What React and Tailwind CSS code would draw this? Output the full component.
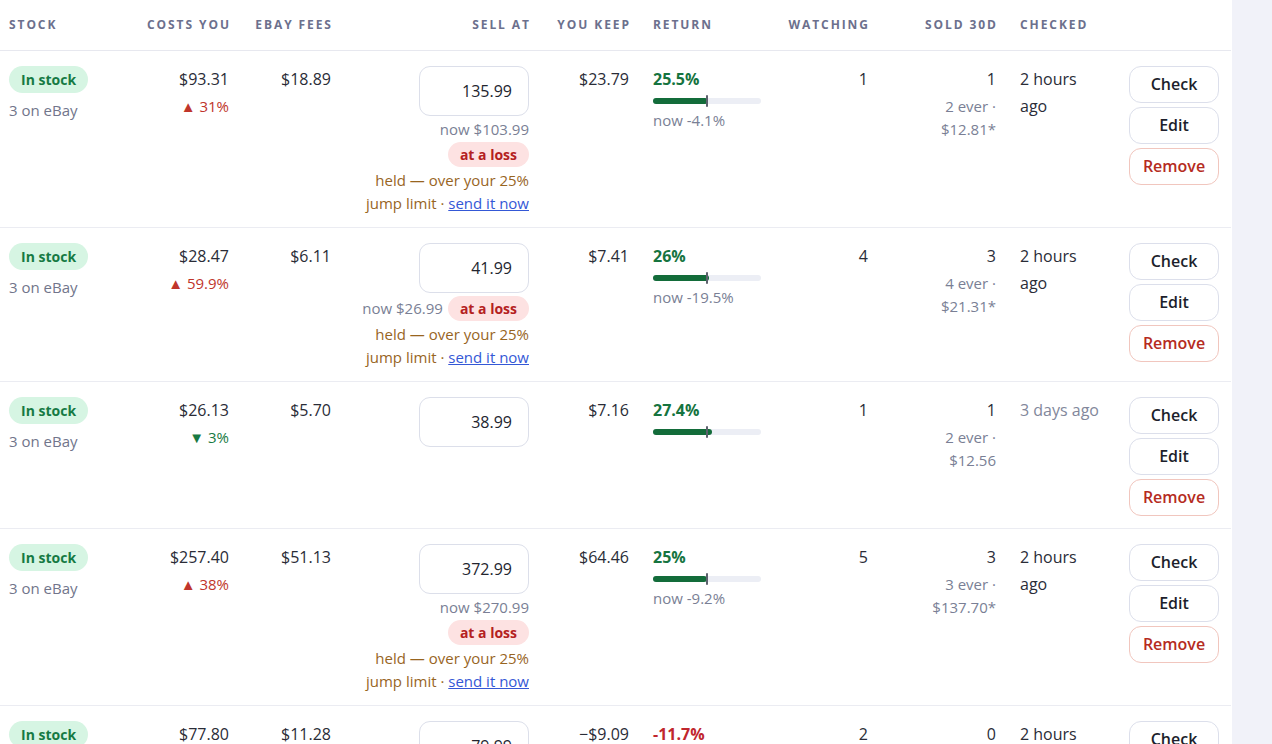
const rows = [
  {
    cost: "$93.31",
    chg: { up: true, v: "31%" },
    fees: "$18.89",
    sell: "135.99",
    now: "$103.99",
    nowInline: false,
    held: true,
    keep: "$23.79",
    ret: 25.5,
    retLabel: "25.5%",
    retNow: "now -4.1%",
    watching: "1",
    sold: "1",
    soldEver: "2 ever ·",
    soldPrice: "$12.81*",
    checked: ["2 hours", "ago"],
  },
  {
    cost: "$28.47",
    chg: { up: true, v: "59.9%" },
    fees: "$6.11",
    sell: "41.99",
    now: "$26.99",
    nowInline: true,
    held: true,
    keep: "$7.41",
    ret: 26,
    retLabel: "26%",
    retNow: "now -19.5%",
    watching: "4",
    sold: "3",
    soldEver: "4 ever ·",
    soldPrice: "$21.31*",
    checked: ["2 hours", "ago"],
  },
  {
    cost: "$26.13",
    chg: { up: false, v: "3%" },
    fees: "$5.70",
    sell: "38.99",
    keep: "$7.16",
    ret: 27.4,
    retLabel: "27.4%",
    watching: "1",
    sold: "1",
    soldEver: "2 ever ·",
    soldPrice: "$12.56",
    checked: ["3 days ago"],
    stale: true,
  },
  {
    cost: "$257.40",
    chg: { up: true, v: "38%" },
    fees: "$51.13",
    sell: "372.99",
    now: "$270.99",
    nowInline: false,
    held: true,
    keep: "$64.46",
    ret: 25,
    retLabel: "25%",
    retNow: "now -9.2%",
    watching: "5",
    sold: "3",
    soldEver: "3 ever ·",
    soldPrice: "$137.70*",
    checked: ["2 hours", "ago"],
  },
  {
    cost: "$77.80",
    chg: { up: true, v: "12%" },
    fees: "$11.28",
    sell: "79.99",
    keep: "\u2212$9.09",
    ret: -11.7,
    retLabel: "-11.7%",
    watching: "2",
    sold: "0",
    checked: ["2 hours", "ago"],
  },
];

const headers = [
  { label: "Stock", align: "left" },
  { label: "Costs you", align: "right" },
  { label: "eBay fees", align: "right" },
  { label: "Sell at", align: "right" },
  { label: "You keep", align: "right" },
  { label: "Return", align: "left" },
  { label: "Watching", align: "right" },
  { label: "Sold 30d", align: "right" },
  { label: "Checked", align: "left" },
  { label: "", align: "left" },
];

function LossPill() {
  return (
    <span className="flex h-[25px] items-center rounded-full bg-[#fde2e2] px-3 text-[14px] font-bold text-[#b42121]">
      at a loss
    </span>
  );
}

function SellAt({ row }) {
  return (
    <div className="flex flex-col items-end">
      <input
        readOnly
        value={row.sell}
        className="h-[50px] w-[110px] rounded-[11px] border border-[#dcdfea] bg-white pr-[16px] text-right text-[16px] text-[#23252f] outline-none"
      />
      {row.now && row.nowInline && (
        <div className="mt-[3px] flex items-center gap-[5px]">
          <span className="text-[15px] leading-[23px] text-[#7a7f95]">now {row.now}</span>
          <LossPill />
        </div>
      )}
      {row.now && !row.nowInline && (
        <>
          <div className="mt-[2px] text-[15px] leading-[23px] text-[#7a7f95]">now {row.now}</div>
          <div className="mt-[1px] flex">
            <LossPill />
          </div>
        </>
      )}
      {row.held && (
        <div className="mt-[2px] text-right text-[15px] leading-[23px] text-[#98651f]">
          <div>held — over your 25%</div>
          <div>
            jump limit ·{" "}
            <a href="#" className="text-[#3458d6] underline">
              send it now
            </a>
          </div>
        </div>
      )}
    </div>
  );
}

function ReturnCell({ row }) {
  const positive = row.ret >= 0;
  const fill = Math.max(0, Math.min(100, (row.ret / 50) * 100));
  return (
    <div>
      <div className={`text-[16px] font-bold leading-[27px] ${positive ? "text-[#16743f]" : "text-[#c0262d]"}`}>
        {row.retLabel}
      </div>
      <div className="relative mt-[5px] h-[6px] w-[108px] rounded-full bg-[#eceef5]">
        <div className="absolute left-0 top-0 h-full rounded-full bg-[#136c3a]" style={{ width: `${fill}%` }} />
        <div className="absolute left-[53px] top-[-3px] h-[12px] w-[2px] rounded-sm bg-[#5d616d]" />
      </div>
      {row.retNow && <div className="mt-[5px] text-[15px] leading-[23px] text-[#7a7f95]">{row.retNow}</div>}
    </div>
  );
}

function Actions() {
  const base = "flex h-[37px] w-[90px] items-center justify-center rounded-[12px] border bg-white text-[16px] font-semibold";
  return (
    <div className="flex flex-col gap-[4px]">
      <button className={`${base} border-[#dcdfeb] text-[#1d1f2c]`}>Check</button>
      <button className={`${base} border-[#dcdfeb] text-[#1d1f2c]`}>Edit</button>
      <button className={`${base} border-[#f1c6be] text-[#b52b21]`}>Remove</button>
    </div>
  );
}

export default function App() {
  const td = "border-b border-[#ebecf2] px-3 pt-[15px] pb-[12px] align-top";
  return (
    <div
      className="flex min-h-screen bg-[#f1f2f9] text-[#2a2c37]"
      style={{ fontFamily: '"Open Sans", "Noto Sans", sans-serif' }}
    >
      <div className="w-[1232px] shrink-0 bg-white">
        <table className="w-[1231px] table-fixed border-collapse">
          <colgroup>
            <col className="w-[133px]" />
            <col className="w-[108px]" />
            <col className="w-[102px]" />
            <col className="w-[198px]" />
            <col className="w-[100px]" />
            <col className="w-[132px]" />
            <col className="w-[107px]" />
            <col className="w-[128px]" />
            <col className="w-[109px]" />
            <col className="w-[114px]" />
          </colgroup>
          <thead>
            <tr>
              {headers.map((h, i) => (
                <th
                  key={i}
                  className={`h-[50px] whitespace-nowrap border-b border-[#e7e8ef] px-3 align-middle text-[12px] font-bold uppercase tracking-[0.16em] text-[#6c708d] ${
                    h.align === "right" ? "text-right" : "text-left"
                  } ${i === 0 ? "pl-[9px]" : ""}`}
                >
                  <span className={h.align === "right" ? "mr-[-0.16em]" : ""}>{h.label}</span>
                </th>
              ))}
            </tr>
          </thead>
          <tbody>
            {rows.map((row, i) => (
              <tr key={i}>
                <td className={`${td} pl-[9px]`}>
                  <span className="inline-flex h-[27px] items-center rounded-full bg-[#d6f5e3] px-3 text-[14px] font-bold text-[#167a44]">
                    In stock
                  </span>
                  <div className="mt-[6px] text-[15px] leading-[23px] text-[#71758b]">3 on eBay</div>
                </td>
                <td className={`${td} text-right`}>
                  <div className="text-[16px] leading-[27px]">{row.cost}</div>
                  <div
                    className={`mt-[2px] text-[15px] leading-[23px] ${
                      row.chg.up ? "text-[#c0352b]" : "text-[#187a43]"
                    }`}
                  >
                    {row.chg.up ? "▲" : "▼"} {row.chg.v}
                  </div>
                </td>
                <td className={`${td} text-right`}>
                  <div className="text-[16px] leading-[27px]">{row.fees}</div>
                </td>
                <td className={td}>
                  <SellAt row={row} />
                </td>
                <td className={`${td} text-right`}>
                  <div className="text-[16px] leading-[27px]">{row.keep}</div>
                </td>
                <td className={td}>
                  <ReturnCell row={row} />
                </td>
                <td className={`${td} text-right`}>
                  <div className="text-[16px] leading-[27px]">{row.watching}</div>
                </td>
                <td className={`${td} text-right`}>
                  <div className="text-[16px] leading-[27px]">{row.sold}</div>
                  {row.soldEver && (
                    <div className="mt-[2px] text-[15px] leading-[23px] text-[#7a7f95]">
                      <div>{row.soldEver}</div>
                      <div>{row.soldPrice}</div>
                    </div>
                  )}
                </td>
                <td className={td}>
                  <div className={`text-[16px] leading-[27px] ${row.stale ? "text-[#82879b]" : "text-[#2a2c37]"}`}>
                    {row.checked.map((c) => (
                      <div key={c}>{c}</div>
                    ))}
                  </div>
                </td>
                <td className={td}>
                  <Actions />
                </td>
              </tr>
            ))}
          </tbody>
        </table>
      </div>
    </div>
  );
}
